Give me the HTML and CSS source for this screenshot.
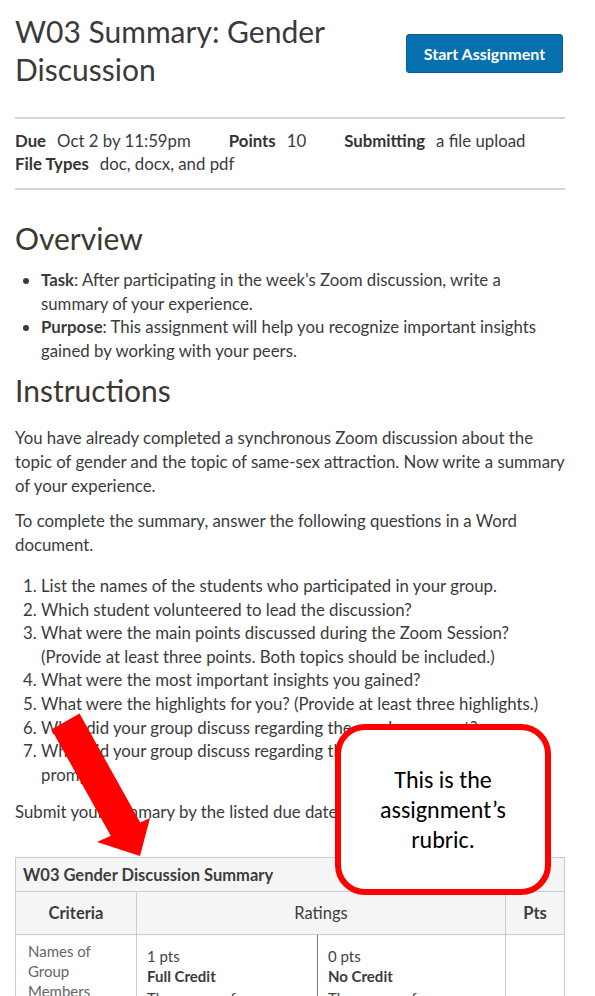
FILE: index.html
```html
<!DOCTYPE html>
<html lang="en">
<head>
<meta charset="utf-8">
<title>W03 Summary: Gender Discussion</title>
<link rel="stylesheet" href="styles.css">
</head>
<body>
<div class="page">
  <div class="header">
    <h1 class="title">W03 Summary: Gender Discussion</h1>
    <button class="btn">Start Assignment</button>
  </div>
  <hr class="rule">
  <ul class="details">
    <li><b>Due</b><span>Oct 2 by 11:59pm</span></li>
    <li><b>Points</b><span>10</span></li>
    <li><b>Submitting</b><span>a file upload</span></li>
    <li><b>File Types</b><span>doc, docx, and pdf</span></li>
  </ul>
  <hr class="rule rule-bottom">
  <div class="content">
    <h2 class="h2 h2-first">Overview</h2>
    <ul class="bullets">
      <li><b>Task</b>: After participating in the week's Zoom discussion, write a summary of your experience.</li>
      <li><b>Purpose</b>: This assignment will help you recognize important insights gained by working with your peers.</li>
    </ul>
    <h2 class="h2">Instructions</h2>
    <p class="para p1">You have already completed a synchronous Zoom discussion about the topic of gender and the topic of same-sex attraction. Now write a summary of your experience.</p>
    <p class="para p2">To complete the summary, answer the following questions in a Word document.</p>
    <ol class="steps">
      <li>List the names of the students who participated in your group.</li>
      <li>Which student volunteered to lead the discussion?</li>
      <li>What were the main points discussed during the Zoom Session? (Provide at least three points. Both topics should be included.)</li>
      <li>What were the most important insights you gained?</li>
      <li>What were the highlights for you? (Provide at least three highlights.)</li>
      <li>What did your group discuss regarding the gender concept?</li>
      <li>What did your group discuss regarding the same-sex attraction topic prompt?</li>
    </ol>
    <p class="para p3">Submit your summary by the listed due date.</p>
  </div>
  <table class="rubric">
    <colgroup>
      <col class="w-crit">
      <col class="w-rat">
      <col class="w-pts">
    </colgroup>
    <thead>
      <tr><th class="caption" colspan="3">W03 Gender Discussion Summary</th></tr>
      <tr class="cols">
        <th class="c-crit">Criteria</th>
        <th class="c-rat">Ratings</th>
        <th class="c-pts">Pts</th>
      </tr>
    </thead>
    <tbody>
      <tr>
        <td class="crit">Names of Group Members</td>
        <td class="ratings">
          <div class="tiers">
            <div class="tier">
              <div class="tier-pts">1 pts</div>
              <div class="tier-name">Full Credit</div>
              <div class="tier-desc">The names of group members are listed.</div>
            </div>
            <div class="tier tier-2">
              <div class="tier-pts">0 pts</div>
              <div class="tier-name">No Credit</div>
              <div class="tier-desc">The names of group members are missing.</div>
            </div>
          </div>
        </td>
        <td class="pts"></td>
      </tr>
    </tbody>
  </table>
</div>
<svg class="arrow" width="595" height="996" viewBox="0 0 595 996" aria-hidden="true">
  <polygon points="79.5,713.5 140.2,822.4 150,818 140,856 97,842 110.8,835.7 51.5,729.5" fill="#ff0000"/>
</svg>
<div class="callout">This is the<br>assignment’s<br>rubric.</div>
</body>
</html>
```
FILE: styles.css
```css
html, body {
  margin: 0;
  padding: 0;
  background: #ffffff;
}
body {
  font-family: Lato, "Noto Sans", sans-serif;
  color: #3b3b3b;
  font-size: 16.8px;
  position: relative;
  width: 595px;
  height: 996px;
  overflow: hidden;
}
.page {
  padding: 12px 30px 0 15px;
}
.header {
  display: flex;
  justify-content: space-between;
  align-items: flex-start;
  gap: 20px;
}
.title {
  margin: 0;
  font-size: 30px;
  line-height: 38px;
  font-weight: 400;
  color: #3a3a3a;
  flex: 1;
}
.btn {
  flex: none;
  margin-top: 22px;
  margin-right: 2px;
  height: 39px;
  width: 157px;
  background: #0770ae;
  border: 1px solid #05609a;
  border-radius: 3px;
  color: #ffffff;
  font-family: Lato, sans-serif;
  font-size: 16px;
  font-weight: 700;
  padding: 0;
}
.rule {
  border: 0;
  border-top: 2px solid #d3d6d8;
  margin: 29px 0 0;
}
.rule-bottom {
  margin-top: 13px;
}
.details {
  list-style: none;
  margin: 10px 0 0;
  padding: 0;
  display: flex;
  flex-wrap: wrap;
  column-gap: 38px;
  line-height: 23px;
}
.details li {
  display: flex;
  gap: 11px;
}
.details b {
  font-weight: 700;
  color: #333;
}
.h2 {
  margin: 11px 0 0;
  font-size: 30px;
  line-height: 34px;
  font-weight: 400;
  color: #3d3830;
}
.h2-first {
  margin-top: 31px;
}
.bullets {
  margin: 13px 0 0;
  padding-left: 26px;
  line-height: 23.5px;
}
.bullets b {
  font-weight: 700;
}
.para {
  margin: 0;
  line-height: 23.8px;
}
.p1 { margin-top: 19px; }
.p2 { margin-top: 12px; }
.p3 { margin-top: 14px; }
.steps {
  margin: 17px 0 0;
  padding-left: 26px;
  line-height: 23.6px;
}
.rubric {
  margin-top: 33px;
  width: 550px;
  border-collapse: collapse;
  font-size: 15px;
  table-layout: fixed;
}
.w-crit { width: 121px; }
.w-pts { width: 59px; }
.rubric th, .rubric td {
  border: 1px solid #c7cdd1;
}
.caption {
  background: #f5f5f5;
  text-align: left;
  height: 33px;
  padding: 0 7px;
  font-size: 16.5px;
  font-weight: 700;
  color: #3d3d3d;
}
.cols th {
  background: #f5f5f5;
  height: 40px;
  font-size: 16.5px;
  color: #3d3d3d;
}
.c-crit { font-weight: 700; }
.c-rat { font-weight: 400; }
.c-pts { font-weight: 700; }
.crit {
  vertical-align: top;
  padding: 6px 12px;
  line-height: 20px;
  color: #666;
}
.ratings {
  padding: 0;
  vertical-align: top;
}
.tiers {
  display: flex;
  height: 80px;
}
.tier {
  flex: 1;
  box-sizing: border-box;
  padding: 11px 10px 0;
  line-height: 20px;
}
.tier:first-child {
  flex: 0 0 180px;
}
.tier-2 {
  border-left: 1px solid #7a7a7a;
}
.tier-pts { color: #444; }
.tier-name { font-weight: 700; color: #3b3b3b; }
.tier-desc { margin-top: 2px; color: #444; }
.arrow {
  position: absolute;
  top: 0;
  left: 0;
  pointer-events: none;
}
.callout {
  position: absolute;
  left: 335px;
  top: 724px;
  width: 216px;
  height: 171px;
  box-sizing: border-box;
  border: 6px solid #ff0000;
  border-radius: 30px;
  background: #ffffff;
  display: flex;
  align-items: center;
  justify-content: center;
  text-align: center;
  font-family: Carlito, "Open Sans", sans-serif;
  font-size: 24px;
  line-height: 30px;
  color: #000;
  padding-top: 0;
}
```
